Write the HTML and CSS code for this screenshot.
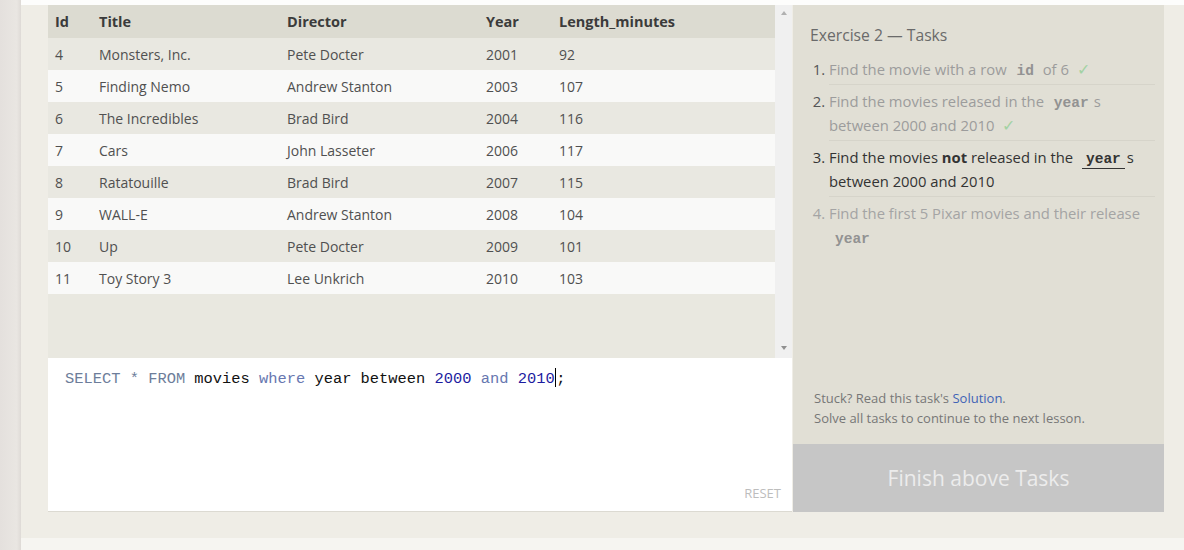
FILE: index.html
```html
<!DOCTYPE html>
<html>
<head>
<meta charset="utf-8">
<link rel="stylesheet" href="styles.css">
</head>
<body>
<div class="page">
  <div class="side-strip"></div>
  <div class="main">
    <div class="top-band"></div>
    <div class="content">
      <div class="exercise">
        <div class="work">
          <div class="results">
            <div class="table-wrap">
              <table class="data">
                <colgroup>
                  <col class="c-id"><col class="c-title"><col class="c-dir"><col class="c-year"><col>
                </colgroup>
                <thead>
                  <tr><th>Id</th><th>Title</th><th>Director</th><th>Year</th><th>Length_minutes</th></tr>
                </thead>
                <tbody>
                  <tr><td>4</td><td>Monsters, Inc.</td><td>Pete Docter</td><td>2001</td><td>92</td></tr>
                  <tr><td>5</td><td>Finding Nemo</td><td>Andrew Stanton</td><td>2003</td><td>107</td></tr>
                  <tr><td>6</td><td>The Incredibles</td><td>Brad Bird</td><td>2004</td><td>116</td></tr>
                  <tr><td>7</td><td>Cars</td><td>John Lasseter</td><td>2006</td><td>117</td></tr>
                  <tr><td>8</td><td>Ratatouille</td><td>Brad Bird</td><td>2007</td><td>115</td></tr>
                  <tr><td>9</td><td>WALL-E</td><td>Andrew Stanton</td><td>2008</td><td>104</td></tr>
                  <tr><td>10</td><td>Up</td><td>Pete Docter</td><td>2009</td><td>101</td></tr>
                  <tr><td>11</td><td>Toy Story 3</td><td>Lee Unkrich</td><td>2010</td><td>103</td></tr>
                </tbody>
              </table>
            </div>
            <div class="scrollbar">
              <span class="arrow up"></span>
              <span class="arrow down"></span>
            </div>
          </div>
          <div class="editor">
            <div class="code"><span class="kw">SELECT</span> <span class="kw">*</span> <span class="kw">FROM</span> movies <span class="kw2">where</span> year between <span class="num">2000</span> <span class="kw2">and</span> <span class="num">2010</span><span class="cursor"></span>;</div>
            <div class="reset">RESET</div>
          </div>
        </div>
        <div class="tasks">
          <div class="tasks-head">Exercise 2 — Tasks</div>
          <ol class="task-list">
            <li class="done">Find the movie with a row <code>id</code> of 6 <span class="check">✓</span></li>
            <li class="done">Find the movies released in the <code>year</code>s between 2000 and 2010 <span class="check">✓</span></li>
            <li class="active">Find the movies <b>not</b> released in the <code class="under">year</code>s between 2000 and 2010</li>
            <li class="todo">Find the first 5 Pixar movies and their release <code>year</code></li>
          </ol>
          <div class="spacer"></div>
          <div class="help">
            <p>Stuck? Read this task's <a class="link">Solution</a>.</p>
            <p>Solve all tasks to continue to the next lesson.</p>
          </div>
          <div class="finish">Finish above Tasks</div>
        </div>
      </div>
    </div>
    <div class="bottom-band"></div>
  </div>
</div>
</body>
</html>
```
FILE: styles.css
```css
* { box-sizing: border-box; }
html, body { margin: 0; padding: 0; }
body {
  width: 1184px;
  height: 550px;
  overflow: hidden;
  background: #efede6;
  font-family: "Open Sans", "Noto Sans", sans-serif;
  color: #444;
}
.page { display: flex; height: 550px; }
.side-strip {
  width: 21px;
  flex: none;
  background: linear-gradient(to right, #e4e0dd, #e9e6e2 80%, #dedad6);
}
.main { flex: 1; display: flex; flex-direction: column; }
.top-band { height: 5px; background: #fdfdfc; }
.content { flex: 1; padding-left: 27px; background: #efede6; }
.exercise { display: flex; height: 507px; width: 1116px; }
.work { width: 744px; display: flex; flex-direction: column; }
.results { height: 353px; display: flex; background: #e9e8e0; }
.table-wrap { width: 727px; }
.data {
  width: 727px;
  table-layout: fixed;
  border-collapse: collapse;
  font-size: 14px;
}
.c-id { width: 44px; }
.c-title { width: 188px; }
.c-dir { width: 199px; }
.c-year { width: 73px; }
.data th {
  height: 33px;
  text-align: left;
  padding: 0 0 0 7px;
  background: #dcdbd1;
  color: #3b3b3b;
  font-weight: 700;
  font-size: 14.5px;
}
.data td {
  height: 32px;
  padding: 0 0 0 7px;
  color: #505050;
  white-space: nowrap;
}
.data tbody tr:nth-child(odd) td { background: #e9e8e1; }
.data tbody tr:nth-child(even) td { background: #f9f9f8; }
.scrollbar {
  width: 17px;
  background: #f0f0f0;
  display: flex;
  flex-direction: column;
  justify-content: space-between;
  align-items: center;
  padding: 6px 0 8px;
}
.arrow { width: 0; height: 0; border-left: 3.5px solid transparent; border-right: 3.5px solid transparent; }
.arrow.up { border-bottom: 4px solid #b0b0b0; }
.arrow.down { border-top: 4px solid #909090; }
.editor {
  flex: 1;
  background: #fff;
  border-bottom: 1px solid #dcdad2;
  display: flex;
  flex-direction: column;
  padding: 10px 10px 9px 17px;
}
.code {
  font-family: "Liberation Mono", "DejaVu Sans Mono", monospace;
  font-size: 15.4px;
  line-height: 20px;
  color: #111;
  flex: 1;
}
.kw { color: #6d7d9a; }
.kw2 { color: #6777b0; }
.num { color: #1c1ca0; }
.cursor {
  display: inline-block;
  width: 1.5px;
  height: 19px;
  background: #000;
  vertical-align: -4px;
}
.reset {
  align-self: flex-end;
  font-size: 13px;
  color: #bdbdbd;
  padding-right: 1px;
}
.tasks {
  width: 371px;
  margin-left: 1px;
  background: #e1dfd5;
  display: flex;
  flex-direction: column;
}
.tasks-head {
  font-size: 15.7px;
  color: #6a6a6a;
  padding: 18px 0 0 17px;
  line-height: 24px;
}
.task-list {
  margin: 6px 9px 0 36px;
  padding: 0;
  font-size: 14.8px;
  line-height: 24px;
  list-style: decimal outside;
}
.task-list li {
  padding: 4px 0 3px;
  border-bottom: 1px solid #d6d4ca;
}
.task-list li:last-child { border-bottom: none; }
.task-list li.done { color: #9c9c9c; }
.task-list li.done::marker { color: #555; }
.task-list li.active { color: #333; }
.task-list li.todo { color: #a4a4a4; }
.task-list code {
  font-family: "Liberation Mono", "DejaVu Sans Mono", monospace;
  font-weight: 700;
  font-size: 14.5px;
  line-height: 1;
  padding: 0 5px 0 6px;
}
.task-list li.done code, .task-list li.todo code { color: #929292; }
.task-list code.under {
  display: inline-block;
  line-height: 18px;
  color: #333;
  border-bottom: 1px solid #333;
  padding: 0 4px 0;
  margin: 0 2px 0 5px;
}
.check { color: #a3d2a3; margin-left: 4px; font-size: 16px; line-height: 1; }
.spacer { flex: 1; }
.help {
  padding: 0 0 16px 21px;
  font-size: 13px;
  color: #777;
  line-height: 20px;
}
.help p { margin: 0; }
.link { color: #3f63b5; }
.finish {
  height: 68px;
  background: #c6c6c6;
  color: #ececec;
  font-size: 21px;
  display: flex;
  align-items: center;
  justify-content: center;
}
.bottom-band { height: 12px; background: #f6f5f1; }
```
